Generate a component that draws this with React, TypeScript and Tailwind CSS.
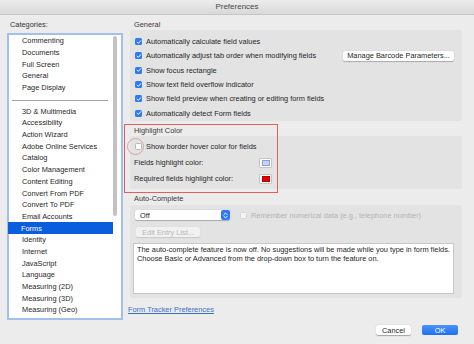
import clsx from "clsx";

const categories = [
  "Commenting",
  "Documents",
  "Full Screen",
  "General",
  "Page Display",
  "---",
  "3D & Multimedia",
  "Accessibility",
  "Action Wizard",
  "Adobe Online Services",
  "Catalog",
  "Color Management",
  "Content Editing",
  "Convert From PDF",
  "Convert To PDF",
  "Email Accounts",
  "Forms",
  "Identity",
  "Internet",
  "JavaScript",
  "Language",
  "Measuring (2D)",
  "Measuring (3D)",
  "Measuring (Geo)",
];

const generalOptions = [
  "Automatically calculate field values",
  "Automatically adjust tab order when modifying fields",
  "Show focus rectangle",
  "Show text field overflow indicator",
  "Show field preview when creating or editing form fields",
  "Automatically detect Form fields",
];

function Checkbox({ checked, disabled }: { checked?: boolean; disabled?: boolean }) {
  if (checked) {
    return (
      <span className="flex h-[7px] w-[7px] shrink-0 items-center justify-center rounded-[1.5px] bg-[#2f7bf5]">
        <svg viewBox="0 0 8 8" className="h-[6px] w-[6px]">
          <path d="M1.6 4.2 L3.2 5.8 L6.4 2.2" fill="none" stroke="white" strokeWidth="1.3" strokeLinecap="round" strokeLinejoin="round" />
        </svg>
      </span>
    );
  }
  return (
    <span
      className={clsx(
        "h-[7px] w-[7px] shrink-0 rounded-[1.5px] border",
        disabled ? "border-[#d6d6d6] bg-[#f4f4f4]" : "border-[#b8b8b8] bg-white"
      )}
    />
  );
}

function Swatch({ color, edge }: { color: string; edge: string }) {
  return (
    <span className="ml-auto mr-[5px] flex h-[10px] w-[13px] items-center justify-center rounded-[1px] border border-[#c4c4c4] bg-white">
      <span className={clsx("h-[6px] w-[8px] border", color, edge)} />
    </span>
  );
}

export default function App() {
  return (
    <div
      className="relative flex h-[344px] w-[474px] flex-col overflow-hidden bg-[#ececec] text-[7.4px] text-[#1f1f1f]"
      style={{ fontFamily: '"Liberation Sans", Arial, sans-serif' }}
    >
      {/* TITLE BAR */}
      <div className="flex h-[15px] shrink-0 items-center justify-center border-b border-[#c6c6c6] bg-gradient-to-b from-[#ececec] to-[#d9d9d9] text-[8px] text-[#4a4a4a]">
        Preferences
      </div>

      <div className="flex flex-1">
        {/* CATEGORIES */}
        <div className="w-[124px] shrink-0 pl-[7px]">
          <div className="mt-[5px] h-[10px] leading-[10px] pl-[3px] text-[#333]">Categories:</div>
          <div className="mt-[3px] flex h-[287px] w-[116px] border-2 border-[#a3bfeb] bg-white">
            <div className="flex-1">
              {categories.map((c) =>
                c === "---" ? (
                  <div key={c} className="flex h-[12px] items-center">
                    <div className="ml-[3px] mt-[2px] h-px w-[96px] bg-[#a6a6a6]" />
                  </div>
                ) : (
                  <div
                    key={c}
                    className={clsx(
                      "flex h-[11.7px] items-center pl-[13px]",
                      c === "Forms" && "-ml-px bg-[#0a5ede] text-white"
                    )}
                  >
                    {c}
                  </div>
                )
              )}
            </div>
            <div className="w-[8px] shrink-0">
              <div className="mt-[1px] h-[180px] w-[4px] rounded-full bg-[#c2c2c2]" />
            </div>
          </div>
        </div>

        {/* SETTINGS */}
        <div className="flex flex-1 flex-col pl-[4px] pr-[12px]">
          <div className="mt-[5px] h-[10px] pl-[6px] leading-[10px] text-[#3a3a3a]">General</div>
          <div className="ml-[2px] rounded-[2px] bg-[#e3e3e3] pl-[5px] pt-[4.5px] pb-[1px]">
            {generalOptions.map((o, i) => (
              <div key={o} className="flex h-[14.3px] items-center gap-[4px]">
                <Checkbox checked />
                <span>{o}</span>
                {i === 1 && (
                  <span className="ml-auto mr-[8px] flex h-[9.5px] w-[111px] items-center justify-center rounded-[2px] bg-white shadow-[0_0.5px_1px_rgba(0,0,0,0.25)]">
                    Manage Barcode Parameters...
                  </span>
                )}
              </div>
            ))}
          </div>

          <div className="mt-[5px] h-[10px] pl-[6px] leading-[10px] text-[#3a3a3a]">Highlight Color</div>
          <div className="ml-[2px] rounded-[2px] bg-[#e3e3e3] pt-[2.5px] pb-[2px]">
            <div className="flex h-[16px] items-center gap-[4px] pl-[5px]">
              <Checkbox />
              <span>Show border hover color for fields</span>
            </div>
            <div className="flex h-[16px] w-[147px] items-center pl-[4px]">
              <span>Fields highlight color:</span>
              <Swatch color="bg-[#c9d0f3]" edge="border-[#8e9fd8]" />
            </div>
            <div className="flex h-[16px] w-[147px] items-center pl-[4px]">
              <span>Required fields highlight color:</span>
              <Swatch color="bg-[#e40000]" edge="border-[#b00000]" />
            </div>
          </div>

          <div className="mt-[5px] h-[10px] pl-[6px] leading-[10px] text-[#3a3a3a]">Auto-Complete</div>
          <div className="ml-[2px] mt-[1px] rounded-[2px] bg-[#e3e3e3] pl-[3px] pr-[8px] pt-[5.5px] pb-[4px]">
            <div className="flex h-[10px] items-center">
              <div className="ml-[2px] flex h-[10px] w-[95px] items-center justify-between rounded-[2px] bg-white pl-[5px] shadow-[0_0.5px_1px_rgba(0,0,0,0.25)]">
                <span>Off</span>
                <span className="flex h-[10px] w-[9px] flex-col items-center justify-center rounded-[2px] bg-[#2f7bf5]">
                  <svg viewBox="0 0 8 10" className="h-[9px] w-[7px]">
                    <path d="M2.2 4 L4 2.2 L5.8 4 M2.2 6 L4 7.8 L5.8 6" fill="none" stroke="white" strokeWidth="1.1" strokeLinecap="round" strokeLinejoin="round" />
                  </svg>
                </span>
              </div>
              <span className="ml-[10px] flex items-center gap-[4px] text-[#b3b3b3]">
                <Checkbox disabled />
                Remember numerical data (e.g., telephone number)
              </span>
            </div>
            <div className="ml-[3px] mt-[7px] flex h-[10px] w-[64px] items-center justify-center rounded-[2px] bg-[#f1f1f1] text-[#b5b5b5] shadow-[0_0.5px_1px_rgba(0,0,0,0.12)]">
              Edit Entry List...
            </div>
            <div className="mt-[6px] h-[51px] border border-[#c8c8c8] bg-white px-[3px] pt-[1px] leading-[9px] text-[#1e1e1e]">
              The auto-complete feature is now off. No suggestions will be made while you type in form fields.
              <br />
              Choose Basic or Advanced from the drop-down box to turn the feature on.
            </div>
          </div>

          <div className="mt-[7px] h-[10px] leading-[10px] text-[#3b6fc6] underline">Form Tracker Preferences</div>

          <div className="mt-[10px] flex justify-end gap-[11px] pr-[4px]">
            <span className="flex h-[10px] w-[35px] items-center justify-center rounded-[2px] bg-white shadow-[0_0.5px_1px_rgba(0,0,0,0.3)]">
              Cancel
            </span>
            <span className="flex h-[10px] w-[36px] items-center justify-center rounded-[2px] bg-gradient-to-b from-[#4a93f8] to-[#1f6ff0] text-white">
              OK
            </span>
          </div>
        </div>
      </div>

      {/* ANNOTATIONS */}
      <div className="pointer-events-none absolute left-[124px] top-[124px] h-[69px] w-[154px] border border-[#e06060]" />
      <div className="pointer-events-none absolute left-[127px] top-[138px] h-[17px] w-[17px] rounded-full border border-[#d9a3a3]" />
    </div>
  );
}
